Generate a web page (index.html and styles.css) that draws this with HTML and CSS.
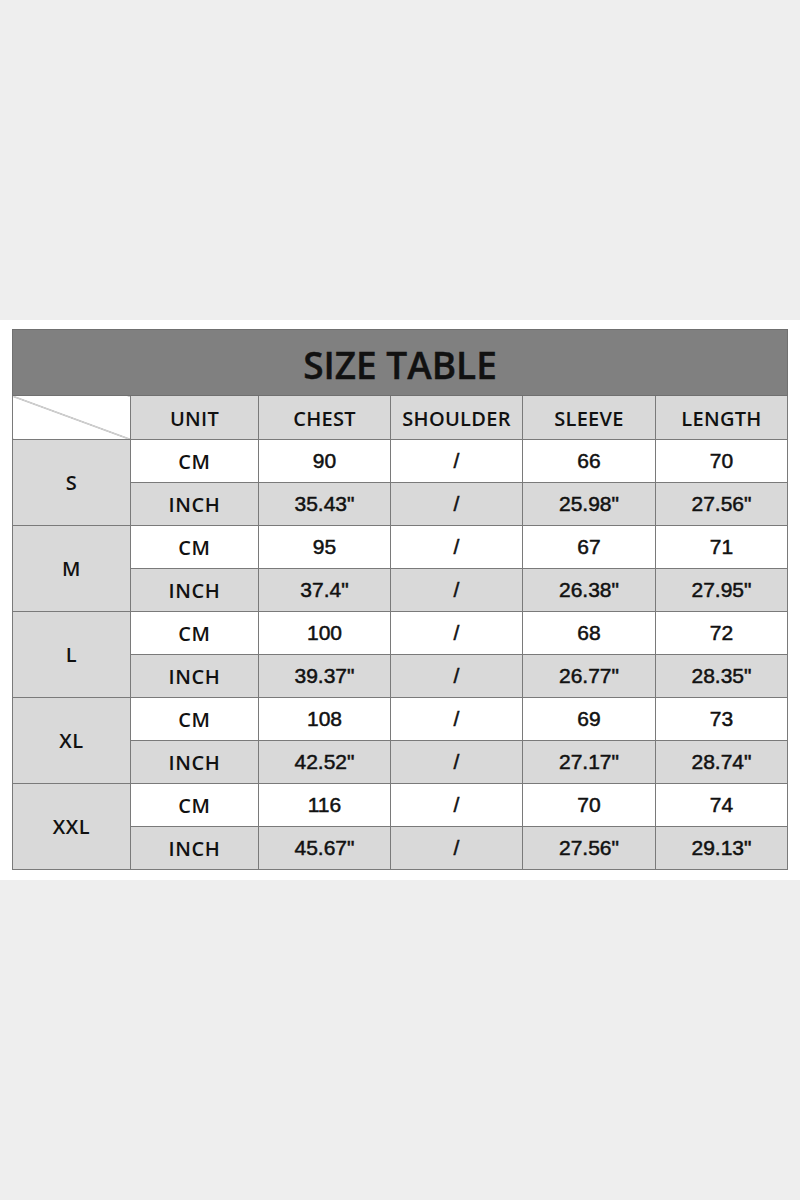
FILE: index.html
```html
<!DOCTYPE html>
<html>
<head>
<meta charset="utf-8">
<link rel="stylesheet" href="styles.css">
</head>
<body>
<div class="panel">
  <table class="size-table">
    <colgroup>
      <col class="c1"><col class="c2"><col class="c3"><col class="c4"><col class="c5"><col class="c6">
    </colgroup>
    <thead>
      <tr><th colspan="6" class="title">SIZE TABLE</th></tr>
      <tr class="head">
        <th class="diag"></th>
        <th>UNIT</th><th>CHEST</th><th>SHOULDER</th><th>SLEEVE</th><th>LENGTH</th>
      </tr>
    </thead>
    <tbody>
      <tr class="cm"><th rowspan="2" class="size">S</th><td class="unit">CM</td><td>90</td><td>/</td><td>66</td><td>70</td></tr>
      <tr class="inch"><td class="unit">INCH</td><td>35.43"</td><td>/</td><td>25.98"</td><td>27.56"</td></tr>
      <tr class="cm"><th rowspan="2" class="size">M</th><td class="unit">CM</td><td>95</td><td>/</td><td>67</td><td>71</td></tr>
      <tr class="inch"><td class="unit">INCH</td><td>37.4"</td><td>/</td><td>26.38"</td><td>27.95"</td></tr>
      <tr class="cm"><th rowspan="2" class="size">L</th><td class="unit">CM</td><td>100</td><td>/</td><td>68</td><td>72</td></tr>
      <tr class="inch"><td class="unit">INCH</td><td>39.37"</td><td>/</td><td>26.77"</td><td>28.35"</td></tr>
      <tr class="cm"><th rowspan="2" class="size">XL</th><td class="unit">CM</td><td>108</td><td>/</td><td>69</td><td>73</td></tr>
      <tr class="inch"><td class="unit">INCH</td><td>42.52"</td><td>/</td><td>27.17"</td><td>28.74"</td></tr>
      <tr class="cm"><th rowspan="2" class="size">XXL</th><td class="unit">CM</td><td>116</td><td>/</td><td>70</td><td>74</td></tr>
      <tr class="inch"><td class="unit">INCH</td><td>45.67"</td><td>/</td><td>27.56"</td><td>29.13"</td></tr>
    </tbody>
  </table>
</div>
</body>
</html>
```
FILE: styles.css
```css
html, body {
  margin: 0;
  padding: 0;
  background: #eeeeee;
  height: 1200px;
}
body {
  padding-top: 320px;
  box-sizing: border-box;
}
.panel {
  background: #ffffff;
  height: 560px;
  box-sizing: border-box;
  padding: 9px 13px 0 12px;
}
.size-table {
  width: 775px;
  border-collapse: collapse;
  table-layout: fixed;
  font-family: "Liberation Sans", Arial, sans-serif;
  color: #111;
}
.c1 { width: 118px; }
.c2 { width: 128px; }
.c3 { width: 132px; }
.c4 { width: 132px; }
.c5 { width: 133px; }
.c6 { width: 132px; }
.size-table th,
.size-table td {
  border: 1px solid #7a7a7a;
  padding: 0;
  height: 42px;
  text-align: center;
  vertical-align: middle;
  font-size: 21px;
  font-weight: normal;
  -webkit-text-stroke: 0.5px #111;
}
.size-table th.title {
  height: 62px;
  background: #808080;
  font-family: "Open Sans", "Noto Sans", sans-serif;
  font-size: 37px;
  font-weight: 600;
  color: #111;
  -webkit-text-stroke: 0.4px #111;
  padding-top: 3px;
  border-color: #707070;
}
.head th {
  height: 42px;
  background: #d9d9d9;
  font-family: "Open Sans", "Noto Sans", sans-serif;
  font-weight: 600;
  font-size: 20px;
  letter-spacing: 0.3px;
  padding-top: 1px;
  -webkit-text-stroke: 0;
}
.head th.diag {
  background: #ffffff linear-gradient(to top right, transparent calc(50% - 0.7px), #7a7a7a 50%, transparent calc(50% + 0.7px));
}
.size-table th.size {
  background: #d9d9d9;
  font-family: "Open Sans", "Noto Sans", sans-serif;
  font-weight: 600;
  font-size: 20px;
  letter-spacing: 0.5px;
  -webkit-text-stroke: 0;
}
.cm td { background: #ffffff; }
.inch td { background: #d9d9d9; }
.size-table td.unit {
  font-family: "Open Sans", "Noto Sans", sans-serif;
  font-weight: 600;
  font-size: 20px;
  letter-spacing: 0.6px;
  -webkit-text-stroke: 0;
}
```
